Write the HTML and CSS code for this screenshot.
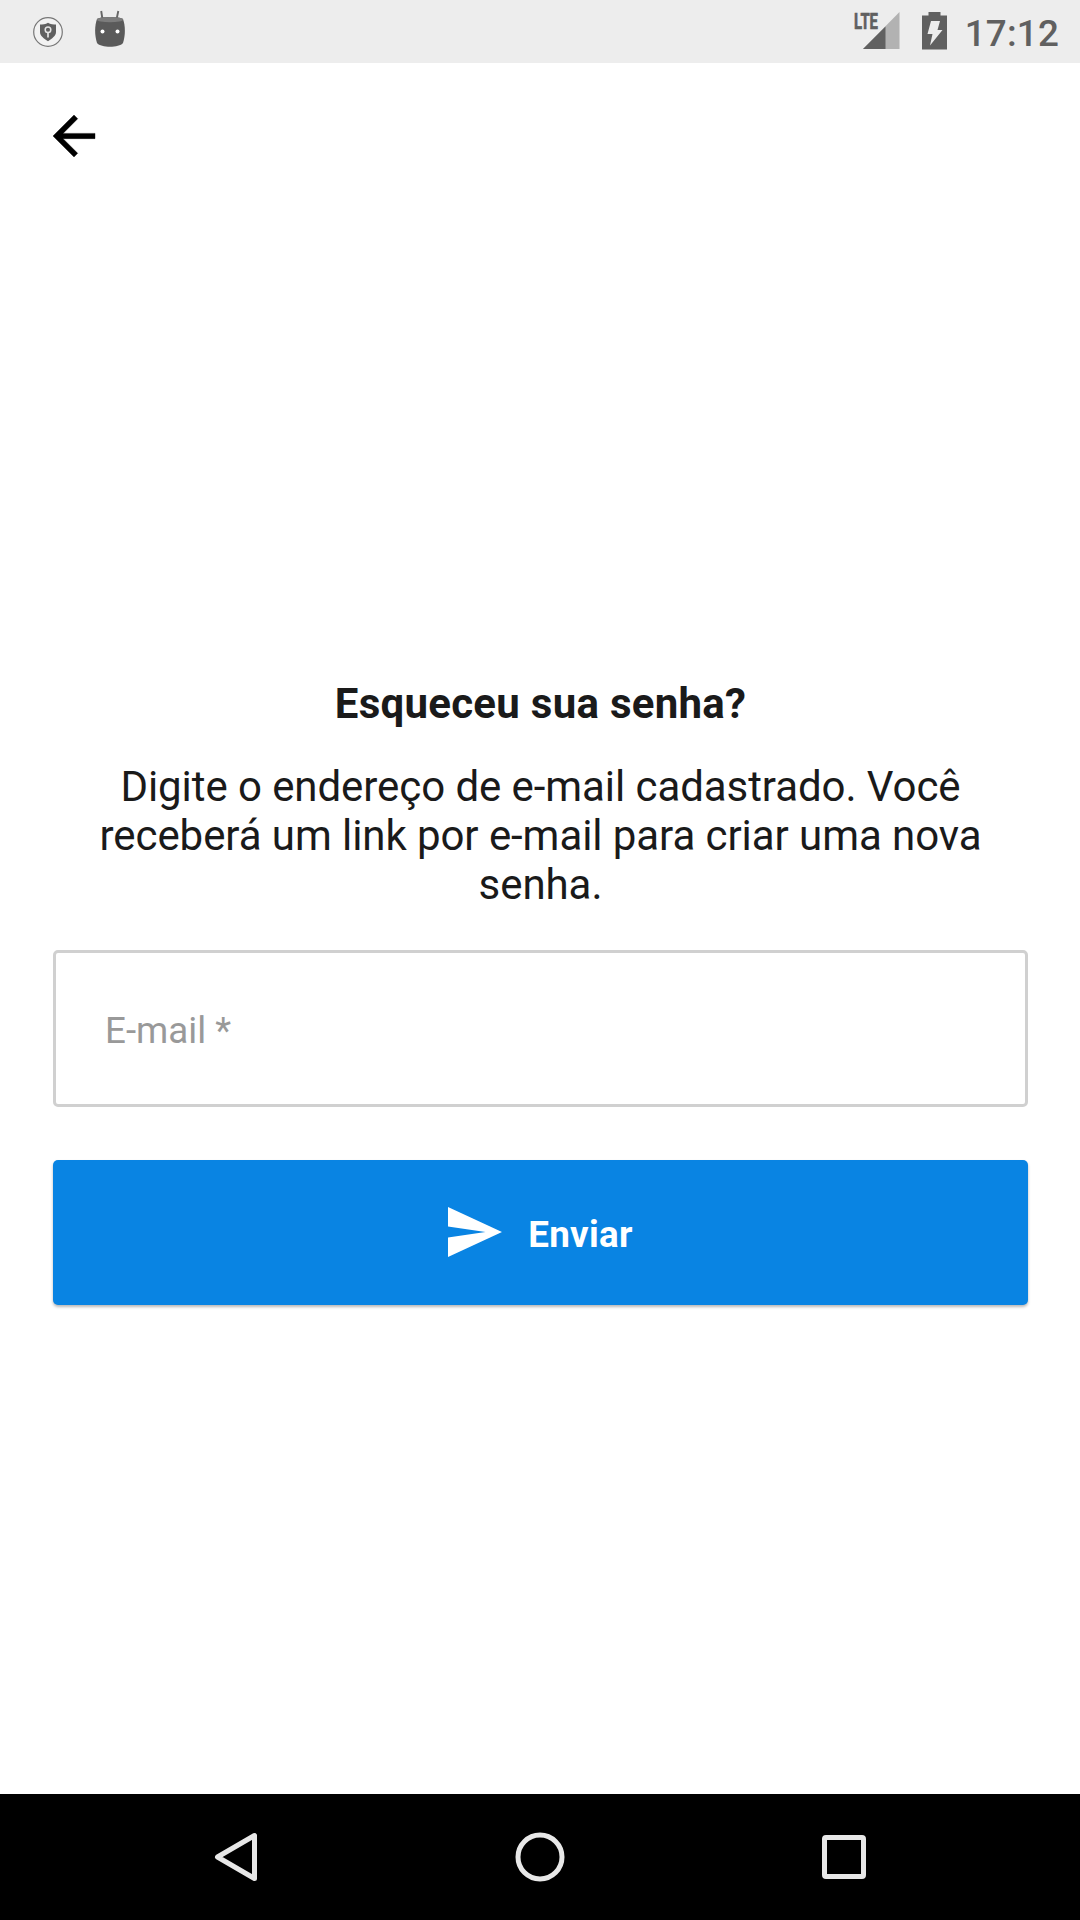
FILE: index.html
```html
<!DOCTYPE html>
<html lang="pt-BR">
<head>
<meta charset="utf-8">
<title>Esqueceu sua senha?</title>
<link rel="stylesheet" href="styles.css">
</head>
<body>
<div class="screen">
  <header class="status-bar">
    <div class="notifications">
      <svg class="shield-icon" viewBox="0 0 30 30">
        <circle cx="15" cy="15" r="14.3" fill="#f2f2f2" stroke="#777" stroke-width="1.2"/>
        <path d="M15 5.8C12.500 7.300 9.500 7.500 7 7.500V15C7 19 11 21.500 15 24.200C19 21.500 23 19 23 15V7.500C20.500 7.500 17.500 7.300 15 5.800Z" fill="#606060"/>
        <circle cx="15" cy="12.700" r="2.800" fill="#606060" stroke="#e4e4e4" stroke-width="1.500"/>
        <path d="M15 15.500V20.500" stroke="#e4e4e4" stroke-width="1.700"/>
      </svg>
      <svg class="robot-icon" viewBox="0 0 32 38">
        <path d="M7.200 1L8.600 10M24.300 1L22.400 10" stroke="#666" stroke-width="1.900"/>
        <path d="M3 9C6 6.300 26 6.300 29 9C31.500 16 31.500 25 29 33C25 38 7 38 3 33C.5 25 .5 16 3 9Z" fill="#5a5a5a"/>
        <ellipse cx="16" cy="9.700" rx="13" ry="2.600" fill="#7c7c7c"/>
        <circle cx="8.500" cy="21.500" r="2" fill="#fff"/>
        <circle cx="23.500" cy="21.500" r="2" fill="#fff"/>
      </svg>
    </div>
    <div class="indicators">
      <svg class="signal-icon" viewBox="0 -10 46 48">
        <path d="M45.500 0V37H9Z" fill="#b2b2b2"/>
        <path d="M31.500 14.500V37H9Z" fill="#606060"/>
        <text class="network" x="0" y="17" textLength="24" lengthAdjust="spacingAndGlyphs">LTE</text>
      </svg>
      <svg class="battery-icon" viewBox="0 0 25 38">
        <path d="M6.500 0H18.500V3.500H25V37.500H0V3.500H6.500Z" fill="#606060"/>
        <path d="M9 9H18L15.500 18H20.500L8 33.500L10.500 22H5.500Z" fill="#ededed"/>
      </svg>
      <time class="clock">17:12</time>
    </div>
  </header>

  <main class="content">
    <button class="back" aria-label="Voltar">
      <svg viewBox="4 4 16 16"><path d="M20 11H7.830l5.590-5.590L12 4l-8 8 8 8 1.410-1.410L7.830 13H20v-2z"/></svg>
    </button>
    <form class="recover">
      <h1 class="title">Esqueceu sua senha?</h1>
      <p class="description">Digite o endereço de e-mail cadastrado. Você receberá um link por e-mail para criar uma nova senha.</p>
      <input class="email" type="email" placeholder="E-mail *">
      <button class="submit" type="button">
        <svg class="send-icon" viewBox="0 0 54 50"><path d="M0 0L54 25L0 50V30.500L37.500 25L0 19.500Z"/></svg>
        <span class="submit-label">Enviar</span>
      </button>
    </form>
  </main>

  <nav class="nav-bar">
    <svg viewBox="0 0 54 54"><path d="M45.500 5.500V48.500L8.500 27Z"/></svg>
    <svg viewBox="0 0 54 54"><circle cx="27" cy="27" r="22"/></svg>
    <svg viewBox="0 0 54 54"><rect x="7.500" y="7.500" width="39" height="39" rx="1.500"/></svg>
  </nav>
</div>
</body>
</html>
```
FILE: styles.css
```css
* {
  box-sizing: border-box;
}

body {
  margin: 0;
  background: #fff;
  font-family: Roboto, sans-serif;
  color: #1a1a1a;
}

button {
  border: 0;
  padding: 0;
  background: none;
  font: inherit;
}

svg {
  display: block;
}

.screen {
  display: flex;
  flex-direction: column;
  width: 1080px;
  height: 1920px;
}

.status-bar {
  display: flex;
  justify-content: space-between;
  height: 63px;
  padding: 0 21px 0 33px;
  background: #ededed;
}

.notifications {
  display: flex;
  align-items: flex-start;
  gap: 31px;
}

.shield-icon {
  width: 30px;
  height: 30px;
  margin-top: 17px;
}

.robot-icon {
  width: 32px;
  height: 38px;
  margin-top: 10px;
}

.indicators {
  display: flex;
  align-items: flex-start;
}

.signal-icon {
  width: 46px;
  height: 48px;
  margin: 2px 22px 0 0;
}

.network {
  font-size: 22.5px;
  font-weight: 700;
  fill: #606060;
  stroke: #606060;
  stroke-width: 0.7px;
}

.battery-icon {
  width: 25px;
  height: 38px;
  margin: 12px 18px 0 0;
}

.clock {
  margin-top: 12px;
  font-size: 36.75px;
  line-height: 43px;
  font-weight: 500;
  letter-spacing: 0.2px;
  color: #606060;
}

.content {
  flex: 1;
  padding: 52px 52px 0 53px;
}

.back {
  display: block;
  width: 42px;
  height: 42px;
}

.back svg {
  width: 42px;
  height: 42px;
  overflow: visible;
  stroke: #000;
  stroke-width: 0.15;
}

.recover {
  display: flex;
  flex-direction: column;
  margin-top: 522px;
}

.title {
  margin: 0 0 34px;
  font-size: 42px;
  line-height: 49px;
  font-weight: 700;
  letter-spacing: 0.27px;
  text-align: center;
}

.description {
  margin: 0 0 41px;
  padding: 0 40px;
  font-size: 42px;
  line-height: 49px;
  letter-spacing: -0.07px;
  text-align: center;
}

.email {
  height: 157px;
  margin-bottom: 53px;
  padding: 3px 49px 0;
  border: 3px solid #d0d0d0;
  border-radius: 5px;
  background: #fff;
  font: 36.75px Roboto, sans-serif;
}

.email::placeholder {
  color: #999;
}

.submit {
  display: flex;
  align-items: center;
  justify-content: center;
  gap: 26px;
  height: 145px;
  border-radius: 5px;
  background: #0984e3;
  box-shadow: 0 2px 3px rgba(0, 0, 0, 0.28);
  color: #fff;
  font-size: 36.75px;
  font-weight: 700;
}

.submit-label {
  padding-top: 3px;
  letter-spacing: 0.3px;
}

.send-icon {
  width: 54px;
  height: 50px;
  margin-bottom: 1px;
  fill: #fff;
}

.nav-bar {
  display: flex;
  align-items: center;
  justify-content: center;
  gap: 250px;
  height: 126px;
  background: #000;
}

.nav-bar svg {
  width: 54px;
  height: 54px;
  fill: none;
  stroke: #e8e8e8;
  stroke-width: 5;
  stroke-linejoin: round;
}
```
